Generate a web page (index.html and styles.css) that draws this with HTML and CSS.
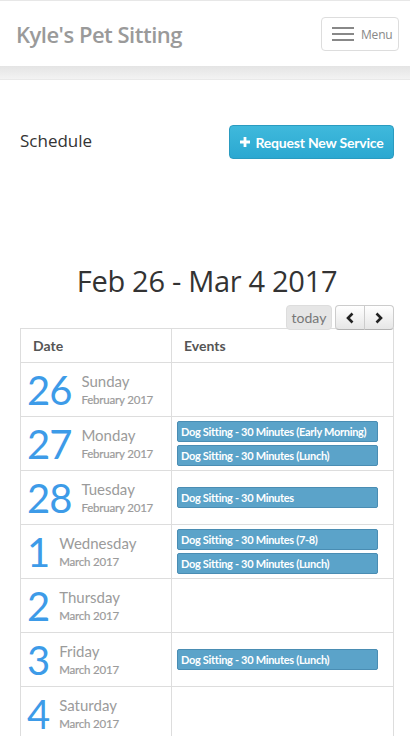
FILE: index.html
```html
<!DOCTYPE html>
<html>
<head>
<meta charset="utf-8">
<link rel="stylesheet" href="styles.css">
</head>
<body>
<header class="navbar">
  <a class="brand">Kyle's Pet Sitting</a>
  <button class="menu-btn">
    <span class="bars"><span></span><span></span><span></span></span>
    <span class="menu-label">Menu</span>
  </button>
</header>
<div class="nav-shadow"></div>

<main class="content">
  <div class="page-head">
    <h2 class="page-title">Schedule</h2>
    <button class="btn-info">
      <svg class="plus" viewBox="0 0 10 10" width="10" height="10"><path d="M3.6 0h2.8v3.6H10v2.8H6.4V10H3.6V6.4H0V3.6h3.6z" fill="#fff"/></svg>
      Request New Service
    </button>
  </div>

  <h1 class="cal-title">Feb 26 - Mar 4 2017</h1>
  <div class="toolbar">
    <button class="fc-btn today">today</button>
    <div class="btn-group">
      <button class="fc-btn nav"><svg viewBox="0 0 10 12" width="10" height="12"><path d="M7.5 1.5L3 6l4.5 4.5" fill="none" stroke="#222" stroke-width="2.6"/></svg></button>
      <button class="fc-btn nav"><svg viewBox="0 0 10 12" width="10" height="12"><path d="M2.5 1.5L7 6l-4.5 4.5" fill="none" stroke="#222" stroke-width="2.6"/></svg></button>
    </div>
  </div>

  <table class="cal">
    <colgroup><col class="col-date"><col></colgroup>
    <thead>
      <tr><th>Date</th><th>Events</th></tr>
    </thead>
    <tbody>
      <tr>
        <td><div class="day"><span class="num">26</span><span class="info"><span class="dname">Sunday</span><span class="month">February 2017</span></span></div></td>
        <td class="c-ev"></td>
      </tr>
      <tr>
        <td><div class="day"><span class="num">27</span><span class="info"><span class="dname">Monday</span><span class="month">February 2017</span></span></div></td>
        <td class="c-ev"><div class="ev">Dog Sitting - 30 Minutes (Early Morning)</div><div class="ev">Dog Sitting - 30 Minutes (Lunch)</div></td>
      </tr>
      <tr>
        <td><div class="day"><span class="num">28</span><span class="info"><span class="dname">Tuesday</span><span class="month">February 2017</span></span></div></td>
        <td class="c-ev"><div class="ev">Dog Sitting - 30 Minutes</div></td>
      </tr>
      <tr>
        <td><div class="day"><span class="num">1</span><span class="info"><span class="dname">Wednesday</span><span class="month">March 2017</span></span></div></td>
        <td class="c-ev"><div class="ev">Dog Sitting - 30 Minutes (7-8)</div><div class="ev">Dog Sitting - 30 Minutes (Lunch)</div></td>
      </tr>
      <tr>
        <td><div class="day"><span class="num">2</span><span class="info"><span class="dname">Thursday</span><span class="month">March 2017</span></span></div></td>
        <td class="c-ev"></td>
      </tr>
      <tr>
        <td><div class="day"><span class="num">3</span><span class="info"><span class="dname">Friday</span><span class="month">March 2017</span></span></div></td>
        <td class="c-ev"><div class="ev">Dog Sitting - 30 Minutes (Lunch)</div></td>
      </tr>
      <tr>
        <td><div class="day"><span class="num">4</span><span class="info"><span class="dname">Saturday</span><span class="month">March 2017</span></span></div></td>
        <td class="c-ev"></td>
      </tr>
    </tbody>
  </table>
</main>
</body>
</html>
```
FILE: styles.css
```css
* { box-sizing: border-box; }
html, body { margin: 0; padding: 0; background: #fff; }
body {
  font-family: Lato, "Open Sans", sans-serif;
  color: #333;
  overflow: hidden;
}
.navbar {
  height: 66px;
  border-top: 1px solid #e7e7e7;
  background: #fff;
  display: flex;
  align-items: center;
  justify-content: space-between;
  padding: 0 11px 0 16px;
}
.brand {
  font-family: "Open Sans", sans-serif;
  font-size: 22px;
  font-weight: 600;
  color: #9a9a9a;
  letter-spacing: -0.5px;
  margin-top: 1px;
}
.menu-btn {
  width: 78px;
  height: 34px;
  margin-top: 1px;
  background: #fff;
  border: 1px solid #ddd;
  border-radius: 4px;
  display: flex;
  align-items: center;
  padding: 0 0 0 10px;
  gap: 7px;
  font-family: "Open Sans", sans-serif;
}
.bars { display: flex; flex-direction: column; gap: 4px; }
.bars span { display: block; width: 22px; height: 2px; background: #888; }
.menu-label { font-size: 12px; color: #888; letter-spacing: -0.2px; }
.nav-shadow {
  height: 14px;
  background: linear-gradient(#e4e4e4, #f3f3f3);
  border-bottom: 1px solid #e9e9e9;
}
.content { padding: 0 16px 0 20px; }
.page-head {
  display: flex;
  justify-content: space-between;
  align-items: center;
  margin-top: 45px;
}
.page-title {
  margin: 0;
  font-family: "Open Sans", sans-serif;
  font-weight: 400;
  font-size: 17px;
  color: #333;
  margin-top: -3px;
}
.btn-info {
  height: 34px;
  width: 165px;
  border: 1px solid #2a9bc0;
  border-radius: 4px;
  background: linear-gradient(#3fb9dc, #2ba8d1);
  color: #fff;
  font-family: Lato, sans-serif;
  font-weight: 700;
  font-size: 14px;
  display: flex;
  align-items: center;
  justify-content: center;
  gap: 6px;
  padding: 0;
  letter-spacing: -0.2px;
}
.plus { margin-top: -1px; }
.cal-title {
  margin: 104px 0 0;
  text-align: center;
  font-family: "Open Sans", sans-serif;
  font-weight: 400;
  font-size: 29px;
  line-height: 36px;
  color: #333;
  padding-left: 0;
  letter-spacing: -0.3px;
}
.toolbar {
  display: flex;
  justify-content: flex-end;
  gap: 3px;
  margin-top: 6px;
  margin-bottom: -2px;
  position: relative;
  z-index: 1;
}
.fc-btn {
  height: 25px;
  border: 1px solid #d4d4d4;
  padding: 0;
  font-family: Lato, sans-serif;
}
.today {
  width: 46px;
  background: #e6e6e6;
  color: #777;
  font-size: 14px;
  border-radius: 4px;
  border-color: #ddd;
}
.btn-group { display: flex; }
.nav {
  width: 30px;
  background: linear-gradient(#fff, #e6e6e6);
  display: flex;
  align-items: center;
  justify-content: center;
  border-color: #ccc #ccc #b3b3b3;
}
.nav:first-child { border-radius: 4px 0 0 4px; }
.nav:last-child { border-radius: 0 4px 4px 0; margin-left: -1px; }
.cal {
  width: 374px;
  table-layout: fixed;
  border-collapse: collapse;
  border: 1px solid #ddd;
}
.col-date { width: 151px; }
.cal th, .cal td { border: 1px solid #ddd; padding: 0; }
.cal th {
  height: 34px;
  text-align: left;
  font-weight: 700;
  font-size: 14px;
  color: #555;
  padding: 0 0 0 12px;
}
.cal td { height: 54px; vertical-align: middle; }
.day { display: flex; align-items: center; padding-left: 6px; }
.num {
  font-size: 40px;
  line-height: 40px;
  color: #3d9be8;
  font-weight: 400;
  margin-right: 10px;
  letter-spacing: -1px;
}
.info { display: flex; flex-direction: column; padding-top: 0; }
.dname { font-size: 15px; color: #9b9b9b; line-height: 20px; }
.month { font-size: 11.5px; color: #9b9b9b; line-height: 18px; font-weight: 400; letter-spacing: -0.2px; -webkit-text-stroke: 0.2px #9b9b9b; }
.c-ev { padding: 0 15px 0 5px !important; }
.ev {
  height: 21px;
  background: #5ba3c9;
  border: 1px solid #4a8db3;
  border-radius: 2px;
  color: #fff;
  font-size: 11px;
  font-weight: 700;
  line-height: 19px;
  padding-left: 3px;
  letter-spacing: -0.3px;
  white-space: nowrap;
  overflow: hidden;
}
.ev + .ev { margin-top: 3px; }
```
